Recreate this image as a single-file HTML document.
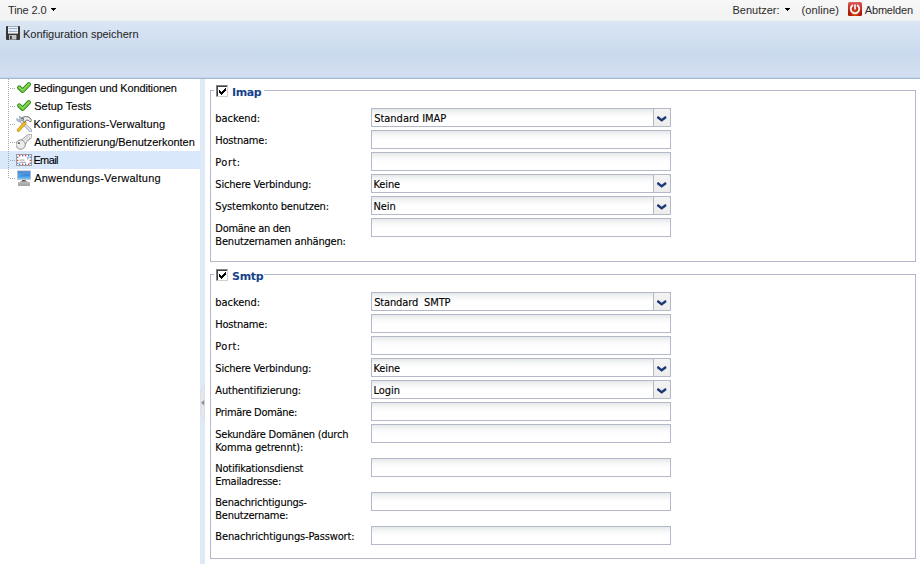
<!DOCTYPE html>
<html lang="de">
<head>
<meta charset="utf-8">
<title>Tine 2.0 Setup</title>
<style>
*{box-sizing:border-box;margin:0;padding:0}
html,body{width:920px;height:564px;overflow:hidden;background:#fff}
body{position:relative;font-family:"Liberation Sans",Arial,sans-serif;font-size:11px;color:#000}
.abs{position:absolute;white-space:nowrap}
#menubar{left:0;top:0;width:920px;height:21px;background:linear-gradient(#f7f7f7,#f2f2f2)}
#menubar .t{top:4px;line-height:13px;color:#2a2a2a;font-size:11px}
#toolbar{left:0;top:20px;width:920px;height:59px;background:linear-gradient(#dbe6f4 0%,#c9d9ed 58%,#d2dff0 95%);border-top:1px solid #ecf1f8;border-bottom:1px solid #a3bad7;box-shadow:inset 0 -1px 0 #c4d4e8}
#toolbar .t{left:23px;top:6px;line-height:14px;color:#222;font-size:11px}
#west{left:0;top:79px;width:200px;height:485px;background:#fff}
#split{left:200px;top:79px;width:5px;height:485px;background:#dfe8f6}
.node{left:0;width:200px;height:18px}
.node.sel{background:#d9e8fb}
.node .t{left:34px;top:2px;line-height:14px;font-size:11px;color:#000;-webkit-text-stroke:.1px #000}
.node svg{position:absolute;left:16px;top:1px}
.vdots{left:8px;top:79px;width:1px;height:99px;background:repeating-linear-gradient(#a8a8a8 0 1px,transparent 1px 2px)}
.hdots{left:9px;width:7px;height:1px;background:repeating-linear-gradient(90deg,transparent 0 1px,#a8a8a8 1px 2px)}
.fs{left:210px;width:706px;border:1px solid #b5b8c8}
.lg{background:#fff;height:14px}
.cb{width:12px;height:12px;border:1px solid;border-color:#808080 #d4d0c8 #d4d0c8 #808080;background:#fff;box-shadow:inset 1px 1px 0 #404040}
.lgt{font-family:"DejaVu Sans","DejaVu Sans Condensed",sans-serif;font-weight:bold;font-size:11px;color:#15428b;line-height:14px}
.lb{left:215px;font-family:"DejaVu Sans Condensed","DejaVu Sans",sans-serif;font-size:11px;line-height:13px;color:#000;-webkit-text-stroke:.12px #000}
.in{left:371px;width:300px;height:19px;border:1px solid #b5b8c8;background:linear-gradient(#e3e7e7 0,#eef1f1 2px,#f8f9f9 5px,#fff 9px)}
.in .v{-webkit-text-stroke:.12px #000;left:2px;top:3px;font-family:"DejaVu Sans Condensed","DejaVu Sans",sans-serif;font-size:11px;line-height:13px}
.tr{right:-1px;top:-1px;width:18px;height:19px;border:1px solid #b5b8c8;border-radius:0 2px 0 0;background:linear-gradient(#f3f3f3,#ededed)}
.tr svg{position:absolute;left:3px;top:6.5px}
.px{shape-rendering:crispEdges}
</style>
</head>
<body>
<div id="menubar" class="abs">
<span class="abs t" id="m0" style="left:8px;letter-spacing:-0.114px;margin-left:0.0px">Tine 2.0</span>
<svg class="abs px" style="left:51px;top:8px" width="5" height="3" viewBox="0 0 5 3"><rect width="5" height="1"/><rect x="1" y="1" width="3" height="1"/><rect x="2" y="2" width="1" height="1"/></svg>
<span class="abs t" id="m1" style="left:732.5px;letter-spacing:0.0px;margin-left:0.0px">Benutzer:</span>
<svg class="abs px" style="left:785px;top:8px" width="5" height="3" viewBox="0 0 5 3"><rect width="5" height="1"/><rect x="1" y="1" width="3" height="1"/><rect x="2" y="2" width="1" height="1"/></svg>
<span class="abs t" id="m2" style="left:801.5px;letter-spacing:0.114px;margin-left:0.0px">(online)</span>
<svg class="abs" style="left:848px;top:2px" width="14" height="14" viewBox="0 0 14 14"><defs><linearGradient id="gp" x1="0" y1="0" x2="0" y2="1"><stop offset="0" stop-color="#dc6060"/><stop offset=".45" stop-color="#c22a1e"/><stop offset="1" stop-color="#9a0a00"/></linearGradient><radialGradient id="gq" cx=".5" cy=".85" r=".45"><stop offset="0" stop-color="#f05a10" stop-opacity=".9"/><stop offset="1" stop-color="#f05a10" stop-opacity="0"/></radialGradient></defs><rect width="14" height="14" rx="1.6" fill="url(#gp)"/><rect width="14" height="14" rx="1.6" fill="url(#gq)"/><path d="M5 3.1a4.3 4.3 0 1 0 4 0" fill="none" stroke="#f2f2f2" stroke-width="1.9"/><path d="M7 2.4v5" stroke="#f2f2f2" stroke-width="1.7"/></svg>
<span class="abs t" id="m3" style="left:864px;letter-spacing:-0.183px;margin-left:0.8px">Abmelden</span>
</div>
<div id="toolbar" class="abs">
<svg class="abs" style="left:5px;top:4px" width="16" height="16" viewBox="0 0 16 16"><rect x="1" y="1" width="14" height="14" rx="1" fill="#383838"/><rect x="3" y="1.4" width="10" height="7.2" fill="#eef3fa"/><path d="M3.6 3.6h8.8M3.6 6.4h8.8" stroke="#8fa9c8" stroke-width="1"/><rect x="4" y="10" width="7.4" height="4.6" fill="#c4c4c4"/><rect x="5" y="10.8" width="1.8" height="3.2" fill="#383838"/></svg>
<span class="abs t" id="tb" style="letter-spacing:0.0px;margin-left:0.0px">Konfiguration speichern</span>
</div>
<div id="west" class="abs"></div>
<div id="split" class="abs"></div>
<svg class="abs" style="left:200px;top:384px" width="5" height="37" viewBox="0 0 5 37"><path d="M5 1L0 7v23l5 6z" fill="#e3e6ec" stroke="#d3d8e2" stroke-width=".6"/><path d="M4.2 16L1 18.7l3.2 2.7z" fill="#8a8f99"/></svg>
<div class="abs node" style="top:79px"><svg width="16" height="16" viewBox="0 0 16 16"><path d="M3.2 7.6L6.7 10.8 12.9 4.3" fill="none" stroke="#2f8417" stroke-width="4.3" stroke-linecap="round" stroke-linejoin="round"/><path d="M3.2 7.6L6.7 10.8 12.9 4.3" fill="none" stroke="#6fcc40" stroke-width="2.6" stroke-linecap="round" stroke-linejoin="round"/><path d="M3.4 7.2L6.7 10.1 12.6 3.9" fill="none" stroke="#a6e880" stroke-width="1" stroke-linecap="round" stroke-linejoin="round" opacity=".8"/></svg><span class="abs t" id="n0" style="letter-spacing:-0.148px;margin-left:-0.64px">Bedingungen und Konditionen</span></div>
<div class="abs node" style="top:97px"><svg width="16" height="16" viewBox="0 0 16 16"><path d="M3.2 7.6L6.7 10.8 12.9 4.3" fill="none" stroke="#2f8417" stroke-width="4.3" stroke-linecap="round" stroke-linejoin="round"/><path d="M3.2 7.6L6.7 10.8 12.9 4.3" fill="none" stroke="#6fcc40" stroke-width="2.6" stroke-linecap="round" stroke-linejoin="round"/><path d="M3.4 7.2L6.7 10.1 12.6 3.9" fill="none" stroke="#a6e880" stroke-width="1" stroke-linecap="round" stroke-linejoin="round" opacity=".8"/></svg><span class="abs t" id="n1" style="letter-spacing:0.016px;margin-left:0.16px">Setup Tests</span></div>
<div class="abs node" style="top:115px"><svg width="16" height="16" viewBox="0 0 16 16">
<path d="M4.2 4.2L14.6 14.6" stroke="#8e98a8" stroke-width="3" stroke-linecap="round"/><path d="M4.2 4.2L14.6 14.6" stroke="#e9edf2" stroke-width="1.6" stroke-linecap="round"/>
<path d="M0.8 2.4a2.7 2.7 0 0 0 3.6 3.2l1.6-1.6A2.7 2.7 0 0 0 3 0.6l1.2 1.6-1.8 1.6z" fill="#b4c2d8" stroke="#7f8da6" stroke-width=".6"/>
<path d="M2.5 14.3L8.9 6.9" stroke="#c08a0a" stroke-width="3.2" stroke-linecap="round"/><path d="M2.5 14.3L8.9 6.9" stroke="#f4bf22" stroke-width="2" stroke-linecap="round"/>
<path d="M5.6 2.2C7.6 0.2 11.6 0 13.8 1.8l2 2.6-1.6 1.6-1.8-1.6-2-.4-1.6 2.2-2.2-2 1.4-1.4c-.8-.4-1.6-.2-2.4-.6z" fill="#ececec" stroke="#4a4a4a" stroke-width=".8" stroke-linejoin="round"/>
</svg><span class="abs t" id="n2" style="letter-spacing:0.14px;margin-left:-0.64px">Konfigurations-Verwaltung</span></div>
<div class="abs node" style="top:133px"><svg width="16" height="16" viewBox="0 0 16 16">
<path d="M4.8 6.4L12.4 0.3l3.4-.2.2 3.3-1.2 1.2-.9-.4-.2 1.4-1-.3-.2 1.4-1-.3-1.9 3.8z" fill="#f1f1f1" stroke="#8a8a8a" stroke-width=".8" stroke-linejoin="round"/>
<path d="M7.4 6.8L14 1.2" stroke="#bdbdbd" stroke-width=".7"/><path d="M8.6 4.4l2.4 2.6M10.2 3l2.4 2.6M11.8 1.6l2.4 2.6" stroke="#c4c4c4" stroke-width=".6"/>
<circle cx="4.6" cy="10.6" r="4.7" fill="#ececec" stroke="#808080" stroke-width=".9"/>
<path d="M1.2 12.4a4 4 0 0 0 6.6 1.4" fill="none" stroke="#c6c6c6" stroke-width="1"/>
<ellipse cx="2.9" cy="9.1" rx="1.2" ry=".9" fill="#505050"/>
</svg><span class="abs t" id="n3" style="letter-spacing:-0.046px;margin-left:0.16px">Authentifizierung/Benutzerkonten</span></div>
<div class="abs node sel" style="top:151px"><svg width="16" height="16" viewBox="0 0 16 16"><rect x="0.5" y="2.5" width="15" height="11" fill="#fff" stroke="#9c9c9c"/><rect x="3" y="3" width="1.3" height="1.4" fill="#e23b3b"/><rect x="3" y="11.6" width="1.3" height="1.4" fill="#3b78d8"/><rect x="6" y="3" width="1.3" height="1.4" fill="#3b78d8"/><rect x="6" y="11.6" width="1.3" height="1.4" fill="#e23b3b"/><rect x="9" y="3" width="1.3" height="1.4" fill="#e23b3b"/><rect x="9" y="11.6" width="1.3" height="1.4" fill="#3b78d8"/><rect x="12" y="3" width="1.3" height="1.4" fill="#3b78d8"/><rect x="12" y="11.6" width="1.3" height="1.4" fill="#e23b3b"/><rect x="1" y="4.6" width="1.4" height="1.3" fill="#3b78d8"/><rect x="13.6" y="4.6" width="1.4" height="1.3" fill="#3b78d8"/><rect x="1" y="7.8" width="1.4" height="1.3" fill="#e23b3b"/><rect x="13.6" y="7.8" width="1.4" height="1.3" fill="#e23b3b"/><rect x="1" y="10.6" width="1.4" height="1.3" fill="#3b78d8"/><rect x="13.6" y="10.6" width="1.4" height="1.3" fill="#3b78d8"/><rect x="11" y="4.8" width="1.6" height="2.6" fill="#8fb4e8"/><path d="M3.4 8.1h5.2M3.4 10.3h6.6" stroke="#777" stroke-width=".7"/></svg><span class="abs t" id="n4" style="letter-spacing:-0.6px;margin-left:-0.64px">Email</span></div>
<div class="abs node" style="top:169px"><svg width="16" height="16" viewBox="0 0 16 16"><defs><linearGradient id="gm" x1="0" y1="0" x2="0" y2="1"><stop offset="0" stop-color="#1f6ad0"/><stop offset=".6" stop-color="#3f93e0"/><stop offset="1" stop-color="#7cc6ee"/></linearGradient></defs>
<rect x="1" y="0.3" width="14" height="9.6" rx=".6" fill="#c3cbd3"/><rect x="1.8" y="1.1" width="12.4" height="8" fill="url(#gm)"/><path d="M1.8 1.1h12.4v2.6C9 4 5 5 1.8 6.6z" fill="#fff" opacity=".18"/>
<rect x="6" y="10" width="3.6" height="1.6" fill="#5a5a5a"/><rect x="4.4" y="11.2" width="7" height=".9" fill="#8a8a8a"/>
<rect x="2" y="12.4" width="12" height="3.4" fill="#8e8e8e"/><path d="M2 13.5h12M2 14.7h12" stroke="#c8c8c8" stroke-width=".6"/></svg><span class="abs t" id="n5" style="letter-spacing:0.24px;margin-left:0.16px">Anwendungs-Verwaltung</span></div>
<div class="abs vdots"></div>
<div class="abs hdots" style="top:88px"></div>
<div class="abs hdots" style="top:106px"></div>
<div class="abs hdots" style="top:124px"></div>
<div class="abs hdots" style="top:142px"></div>
<div class="abs hdots" style="top:160px"></div>
<div class="abs hdots" style="top:178px"></div>
<div class="abs fs" style="top:90px;height:172px"></div>
<div class="abs lg" style="left:214px;top:84px;width:50px"></div>
<div class="abs cb" style="left:216px;top:85px"></div>
<svg class="abs px" style="left:219px;top:88px" width="7" height="7" viewBox="0 0 7 7"><rect x="0" y="2" width="1" height="3"/><rect x="1" y="3" width="1" height="3"/><rect x="2" y="4" width="1" height="3"/><rect x="3" y="3" width="1" height="3"/><rect x="4" y="2" width="1" height="3"/><rect x="5" y="1" width="1" height="3"/><rect x="6" y="0" width="1" height="3"/></svg>
<span class="abs lgt" id="ilg" style="left:232px;top:86px;letter-spacing:-0.373px;margin-left:0.0px">Imap</span>
<span class="abs lb" id="i0_0" style="top:112px;letter-spacing:-0.046px;margin-left:0.32px">backend:</span>
<div class="abs in" style="top:108px"><span class="abs v" id="iv0" style="letter-spacing:-0.013px;margin-left:0.16px">Standard IMAP</span><div class="abs tr"><svg width="10" height="6" viewBox="0 0 10 6"><path d="M0 1.1L1.2 0 4.7 2.7 8.2 0 9.4 1.1V2.3L4.7 5.7 0 2.3z" fill="#1c3a78"/></svg></div></div>
<span class="abs lb" id="i1_0" style="top:134px;letter-spacing:-0.22px;margin-left:0.32px">Hostname:</span>
<div class="abs in" style="top:130px"></div>
<span class="abs lb" id="i2_0" style="top:156px;letter-spacing:0.48px;margin-left:0.32px">Port:</span>
<div class="abs in" style="top:152px"></div>
<span class="abs lb" id="i3_0" style="top:178px;letter-spacing:-0.205px;margin-left:0.32px">Sichere Verbindung:</span>
<div class="abs in" style="top:174px"><span class="abs v" id="iv3" style="letter-spacing:-0.08px;margin-left:-0.64px">Keine</span><div class="abs tr"><svg width="10" height="6" viewBox="0 0 10 6"><path d="M0 1.1L1.2 0 4.7 2.7 8.2 0 9.4 1.1V2.3L4.7 5.7 0 2.3z" fill="#1c3a78"/></svg></div></div>
<span class="abs lb" id="i4_0" style="top:200px;letter-spacing:-0.184px;margin-left:0.32px">Systemkonto benutzen:</span>
<div class="abs in" style="top:196px"><span class="abs v" id="iv4" style="letter-spacing:-0.053px;margin-left:-0.64px">Nein</span><div class="abs tr"><svg width="10" height="6" viewBox="0 0 10 6"><path d="M0 1.1L1.2 0 4.7 2.7 8.2 0 9.4 1.1V2.3L4.7 5.7 0 2.3z" fill="#1c3a78"/></svg></div></div>
<span class="abs lb" id="i5_0" style="top:222px;letter-spacing:-0.293px;margin-left:0.32px">Domäne an den</span>
<span class="abs lb" id="i5_1" style="top:235px;letter-spacing:-0.196px;margin-left:0.32px">Benutzernamen anhängen:</span>
<div class="abs in" style="top:218px"></div>
<div class="abs fs" style="top:274px;height:285px"></div>
<div class="abs lg" style="left:214px;top:268px;width:50px"></div>
<div class="abs cb" style="left:216px;top:269px"></div>
<svg class="abs px" style="left:219px;top:272px" width="7" height="7" viewBox="0 0 7 7"><rect x="0" y="2" width="1" height="3"/><rect x="1" y="3" width="1" height="3"/><rect x="2" y="4" width="1" height="3"/><rect x="3" y="3" width="1" height="3"/><rect x="4" y="2" width="1" height="3"/><rect x="5" y="1" width="1" height="3"/><rect x="6" y="0" width="1" height="3"/></svg>
<span class="abs lgt" id="slg" style="left:232px;top:270px;letter-spacing:-0.266px;margin-left:0.0px">Smtp</span>
<span class="abs lb" id="s0_0" style="top:296px;letter-spacing:-0.046px;margin-left:0.32px">backend:</span>
<div class="abs in" style="top:292px"><span class="abs v" id="sv0" style="letter-spacing:-0.135px;margin-left:0.16px">Standard&nbsp; SMTP</span><div class="abs tr"><svg width="10" height="6" viewBox="0 0 10 6"><path d="M0 1.1L1.2 0 4.7 2.7 8.2 0 9.4 1.1V2.3L4.7 5.7 0 2.3z" fill="#1c3a78"/></svg></div></div>
<span class="abs lb" id="s1_0" style="top:318px;letter-spacing:-0.22px;margin-left:0.32px">Hostname:</span>
<div class="abs in" style="top:314px"></div>
<span class="abs lb" id="s2_0" style="top:340px;letter-spacing:0.48px;margin-left:0.32px">Port:</span>
<div class="abs in" style="top:336px"></div>
<span class="abs lb" id="s3_0" style="top:362px;letter-spacing:-0.205px;margin-left:0.32px">Sichere Verbindung:</span>
<div class="abs in" style="top:358px"><span class="abs v" id="sv3" style="letter-spacing:-0.08px;margin-left:-0.64px">Keine</span><div class="abs tr"><svg width="10" height="6" viewBox="0 0 10 6"><path d="M0 1.1L1.2 0 4.7 2.7 8.2 0 9.4 1.1V2.3L4.7 5.7 0 2.3z" fill="#1c3a78"/></svg></div></div>
<span class="abs lb" id="s4_0" style="top:384px;letter-spacing:-0.168px;margin-left:0.32px">Authentifizierung:</span>
<div class="abs in" style="top:380px"><span class="abs v" id="sv4" style="letter-spacing:0.0px;margin-left:-0.64px">Login</span><div class="abs tr"><svg width="10" height="6" viewBox="0 0 10 6"><path d="M0 1.1L1.2 0 4.7 2.7 8.2 0 9.4 1.1V2.3L4.7 5.7 0 2.3z" fill="#1c3a78"/></svg></div></div>
<span class="abs lb" id="s5_0" style="top:406px;letter-spacing:-0.32px;margin-left:0.32px">Primäre Domäne:</span>
<div class="abs in" style="top:402px"></div>
<span class="abs lb" id="s6_0" style="top:428px;letter-spacing:-0.25px;margin-left:0.32px">Sekundäre Domänen (durch</span>
<span class="abs lb" id="s6_1" style="top:441px;letter-spacing:-0.15px;margin-left:0.32px">Komma getrennt):</span>
<div class="abs in" style="top:424px"></div>
<span class="abs lb" id="s7_0" style="top:462px;letter-spacing:-0.24px;margin-left:0.32px">Notifikationsdienst</span>
<span class="abs lb" id="s7_1" style="top:475px;letter-spacing:-0.294px;margin-left:0.32px">Emailadresse:</span>
<div class="abs in" style="top:458px"></div>
<span class="abs lb" id="s8_0" style="top:496px;letter-spacing:-0.253px;margin-left:0.32px">Benachrichtigungs-</span>
<span class="abs lb" id="s8_1" style="top:509px;letter-spacing:-0.227px;margin-left:0.32px">Benutzername:</span>
<div class="abs in" style="top:492px"></div>
<span class="abs lb" id="s9_0" style="top:530px;letter-spacing:-0.154px;margin-left:0.32px">Benachrichtigungs-Passwort:</span>
<div class="abs in" style="top:526px"></div>
</body>
</html>
